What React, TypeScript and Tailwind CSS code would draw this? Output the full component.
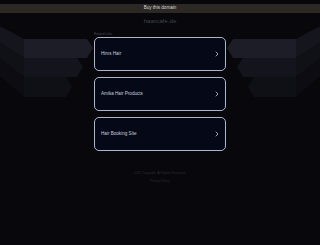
import React from "react";

const links = ["Hims Hair", "Amika Hair Products", "Hair Booking Site"];

// decorative 3d arrows pointing at the link cards (left side, mirrored for right)
function Arrows() {
  return (
    <g>
      <polygon points="0,26 24,39 24,58 0,43" fill="#15151d" />
      <polygon points="0,43 24,58 24,77 0,59" fill="#101017" />
      <polygon points="0,59 24,77 24,97 0,76" fill="#0c0c12" />
      <polygon points="24,39 87,39 93,48 87,58 24,58" fill="#1d1d27" />
      <polygon points="24,58 77,58 83,67 77,77 24,77" fill="#14141c" />
      <polygon points="24,77 66,77 72,87 66,97 24,97" fill="#0f0f16" />
    </g>
  );
}

function Chevron() {
  return (
    <svg width="4" height="6" viewBox="0 0 4 6" fill="none">
      <path d="M1 1l2 2-2 2" stroke="#c9cedd" strokeWidth="0.8" strokeLinecap="round" strokeLinejoin="round" />
    </svg>
  );
}

export default function App() {
  return (
    <div className="relative min-h-[245px] overflow-hidden bg-[#07070c] font-['Liberation_Sans',Arial,sans-serif]">
      <svg className="absolute inset-0" width="320" height="245" viewBox="0 0 320 245">
        <Arrows />
        <g transform="translate(320,0) scale(-1,1)">
          <Arrows />
        </g>
      </svg>

      <div className="relative flex flex-col pt-[4px]">
        <div className="flex h-[9px] items-center justify-center bg-[#2c2823] text-[4.6px] text-[#d8d8d8]">
          Buy this domain
        </div>
        <div className="mt-[3px] flex h-[10px] items-center justify-center text-[6.2px] text-[#3f424c]">
          haarcafe.de
        </div>

        <div className="mx-auto mt-[6px] flex w-[132px] flex-col">
          <div className="flex h-[4px] items-center text-[3px] text-[#4a4c58]">Related Links</div>
          <div className="mt-[1px] flex flex-col gap-[6px]">
            {links.map((label) => (
              <div
                key={label}
                className="flex h-[34px] items-center justify-between rounded-[5px] border border-[#aeb6ca] bg-[#050817] pl-[6px] pr-[6px] text-[4.6px] text-[#c9cedd]"
              >
                <span>{label}</span>
                <Chevron />
              </div>
            ))}
          </div>
        </div>

        <div className="mt-[20px] flex h-[4px] items-center justify-center text-[3.2px] text-[#2c2d38]">
          2025 Copyright. All Rights Reserved.
        </div>
        <div className="mt-[4px] flex h-[4px] items-center justify-center text-[3.2px] text-[#2c2d38]">
          Privacy Policy
        </div>
      </div>
    </div>
  );
}
